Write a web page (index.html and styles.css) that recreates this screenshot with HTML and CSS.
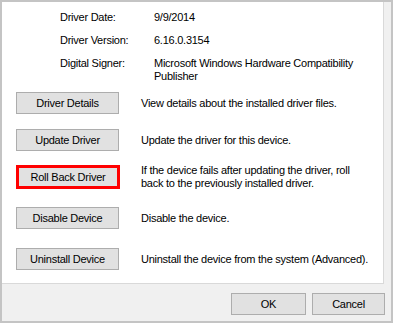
FILE: index.html
```html
<!DOCTYPE html>
<html>
<head>
<meta charset="utf-8">
<link rel="stylesheet" href="styles.css">
</head>
<body>
<div class="window">
  <div class="panel">
    <div class="info">
      <div class="label">Driver Date:</div>
      <div class="value">9/9/2014</div>
      <div class="label">Driver Version:</div>
      <div class="value">6.16.0.3154</div>
      <div class="label">Digital Signer:</div>
      <div class="value">Microsoft Windows Hardware Compatibility Publisher</div>
    </div>
    <div class="actions">
      <div class="action">
        <button class="btn">Driver Details</button>
        <div class="desc">View details about the installed driver files.</div>
      </div>
      <div class="action">
        <button class="btn">Update Driver</button>
        <div class="desc">Update the driver for this device.</div>
      </div>
      <div class="action wide">
        <button class="btn highlight">Roll Back Driver</button>
        <div class="desc">If the device fails after updating the driver, roll back to the previously installed driver.</div>
      </div>
      <div class="action wide">
        <button class="btn">Disable Device</button>
        <div class="desc">Disable the device.</div>
      </div>
      <div class="action wide">
        <button class="btn">Uninstall Device</button>
        <div class="desc">Uninstall the device from the system (Advanced).</div>
      </div>
    </div>
  </div>
  <div class="footer">
    <button class="btn dlg">OK</button>
    <button class="btn dlg cancel">Cancel</button>
  </div>
</div>
</body>
</html>
```
FILE: styles.css
```css
* { box-sizing: border-box; }
html, body { margin: 0; padding: 0; }
body {
  font-family: "Liberation Sans", Arial, sans-serif;
  font-size: 11px;
  letter-spacing: -0.25px;
  color: #000;
}
.window {
  width: 393px;
  height: 323px;
  background: #f0f0f0;
  border: 2px solid #c4c4c4;
  display: flex;
  flex-direction: column;
}
.panel {
  background: #fff;
  height: 282px;
  margin-right: 7px;
  border-right: 1px solid #d9d9d9;
  border-bottom: 1px solid #d9d9d9;
  padding: 9px 0 0 14px;
}
.info {
  display: grid;
  grid-template-columns: 94px 215px;
  row-gap: 10px;
  padding-left: 44px;
  line-height: 13px;
}
.actions {
  margin-top: 9px;
  display: flex;
  flex-direction: column;
}
.action {
  display: flex;
  align-items: center;
  gap: 22px;
  height: 22px;
  margin-bottom: 15px;
}
.action.wide { margin-bottom: 19px; }
.desc {
  line-height: 13px;
  width: 232px;
}
.btn {
  font-family: "Liberation Sans", Arial, sans-serif;
  font-size: 11px;
  letter-spacing: -0.25px;
  color: #000;
  background: #e1e1e1;
  border: 1px solid #adadad;
  width: 103px;
  height: 22px;
  padding: 0;
  flex: none;
}
.btn.highlight {
  border: 3px solid #ff0000;
  height: 24px;
  width: 104px;
  margin: 0 -1px 0 0;
}
.footer {
  flex: 1;
  display: flex;
  justify-content: flex-end;
  align-items: flex-start;
  padding: 9px 6px 0 0;
  gap: 6px;
}
.btn.dlg {
  width: 75px;
  height: 22px;
}
.btn.cancel { width: 73px; }
```
